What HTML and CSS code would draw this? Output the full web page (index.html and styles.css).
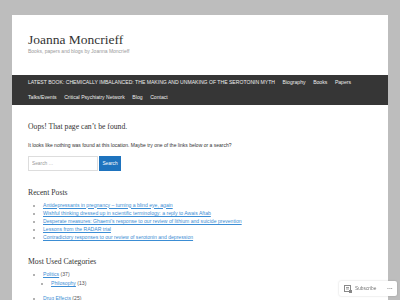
FILE: index.html
```html
<!DOCTYPE html>
<html lang="en">

<head>
    <meta charset="UTF-8">
    <meta name="viewport" content="width=device-width, initial-scale=1.0">
    <title>Page not found – Joanna Moncrieff</title>
    <link rel="stylesheet" href="styles.css">
</head>

<body>
    <div class="page">
        <header class="site-header">
            <div class="site-title">Joanna Moncrieff</div>
            <div class="site-description">Books, papers and blogs by Joanna Moncrieff</div>
        </header>

        <nav class="main-nav">
            <ul>
                <li><a href="#">LATEST BOOK: CHEMICALLY IMBALANCED: THE MAKING AND UNMAKING OF THE SEROTONIN MYTH</a></li>
                <li><a href="#">Biography</a></li>
                <li><a href="#">Books</a></li>
                <li><a href="#">Papers</a></li>
                <li><a href="#">Talks/Events</a></li>
                <li><a href="#">Critical Psychiatry Network</a></li>
                <li><a href="#">Blog</a></li>
                <li><a href="#">Contact</a></li>
            </ul>
        </nav>

        <main class="content">
            <h1 class="page-title">Oops! That page can’t be found.</h1>
            <p class="intro">It looks like nothing was found at this location. Maybe try one of the links below or a search?</p>

            <form class="search-form">
                <input type="search" class="search-field" placeholder="Search …">
                <button type="button" class="search-submit">Search</button>
            </form>

            <section class="widget">
                <h2 class="widget-title">Recent Posts</h2>
                <ul>
                    <li><a href="#">Antidepressants in pregnancy – turning a blind eye, again</a></li>
                    <li><a href="#">Wishful thinking dressed up in scientific terminology: a reply to Awais Aftab</a></li>
                    <li><a href="#">Desperate measures: Ghaemi’s response to our review of lithium and suicide prevention</a></li>
                    <li><a href="#">Lessons from the RADAR trial</a></li>
                    <li><a href="#">Contradictory responses to our review of serotonin and depression</a></li>
                </ul>
            </section>

            <section class="widget">
                <h2 class="widget-title">Most Used Categories</h2>
                <ul>
                    <li><a href="#">Politics</a> (37)
                        <ul class="children">
                            <li><a href="#">Philosophy</a> (13)</li>
                        </ul>
                    </li>
                    <li><a href="#">Drug Effects</a> (25)</li>
                </ul>
            </section>
        </main>
    </div>

    <div class="action-bar">
        <svg class="reader-icon" width="8" height="8" viewBox="0 0 8 8">
            <rect x="0.5" y="0.5" width="6" height="6" fill="none" stroke="#888" stroke-width="1"/>
            <path d="M2 2.5h3M2 4h3" stroke="#888" stroke-width="0.8"/>
            <path d="M5 5h3v3h-3z" fill="#888"/>
        </svg>
        <span class="action-label">Subscribe</span>
        <span class="action-more">•••</span>
    </div>
</body>

</html>
```

FILE: styles.css
```css
body {
    margin: 0;
    background-color: #bdbdbd;
    font-family: "Liberation Sans", Arial, sans-serif;
    color: #333;
}

.page {
    margin: 15px 12px 0;
    background-color: #fff;
    padding-bottom: 40px;
}

.site-header {
    padding: 17px 16px 20px;
}

.site-title {
    font-family: "Liberation Serif", "Times New Roman", serif;
    font-size: 13.5px;
    line-height: 15px;
    color: #333;
}

.site-description {
    margin-top: 1px;
    font-size: 5px;
    line-height: 7px;
    color: #999;
}

.main-nav {
    background-color: #363636;
    padding: 0 16px;
}

.main-nav ul {
    list-style: none;
    margin: 0;
    padding: 0;
    display: flex;
    flex-wrap: wrap;
    column-gap: 7.6px;
    font-size: 5.1px;
}

.main-nav li {
    line-height: 15px;
}

.main-nav a {
    color: #eee;
    text-decoration: none;
}

.content {
    padding: 0 16px;
}

.page-title {
    margin: 17px 0 0;
    font-family: "Liberation Serif", "Times New Roman", serif;
    font-weight: normal;
    font-size: 7.7px;
    line-height: 10px;
    color: #333;
}

.intro {
    margin: 9px 0 0;
    font-size: 5px;
    line-height: 8px;
}

.search-form {
    margin-top: 7px;
    display: flex;
    height: 15px;
}

.search-field {
    width: 70px;
    box-sizing: border-box;
    border: 1px solid #ddd;
    padding: 0 3px;
    margin: 0;
    font-family: inherit;
    font-size: 4.8px;
    color: #333;
    outline: none;
}

.search-field::placeholder {
    color: #999;
}

.search-submit {
    width: 22px;
    margin-left: 1px;
    border: none;
    padding: 0;
    background-color: #1e73be;
    color: #fff;
    font-family: inherit;
    font-size: 4.8px;
}

.widget-title {
    margin: 16.5px 0 0;
    font-family: "Liberation Serif", "Times New Roman", serif;
    font-weight: normal;
    font-size: 7.7px;
    line-height: 10px;
    color: #333;
}

.widget ul {
    margin: 3px 0 0;
    padding-left: 15px;
    list-style: disc;
    font-size: 5.1px;
}

.widget li {
    line-height: 8.1px;
    color: #555;
}

.widget li::marker {
    color: #999;
}

.widget a {
    color: #3b8dd4;
}

.widget ul.children {
    margin: 0 0 7.5px;
    padding-left: 8px;
}

.action-bar {
    position: fixed;
    right: 3px;
    bottom: 4px;
    width: 58px;
    height: 15px;
    box-sizing: border-box;
    padding: 0 4px 0 5px;
    display: flex;
    align-items: center;
    background-color: #fff;
    border-radius: 2px;
    box-shadow: 0 0 2px rgba(0, 0, 0, 0.2);
    font-size: 4.8px;
    color: #777;
}

.reader-icon {
    flex: none;
}

.action-label {
    margin-left: 3px;
}

.action-more {
    margin-left: auto;
    font-size: 4px;
    letter-spacing: 0.5px;
    color: #888;
}
```
